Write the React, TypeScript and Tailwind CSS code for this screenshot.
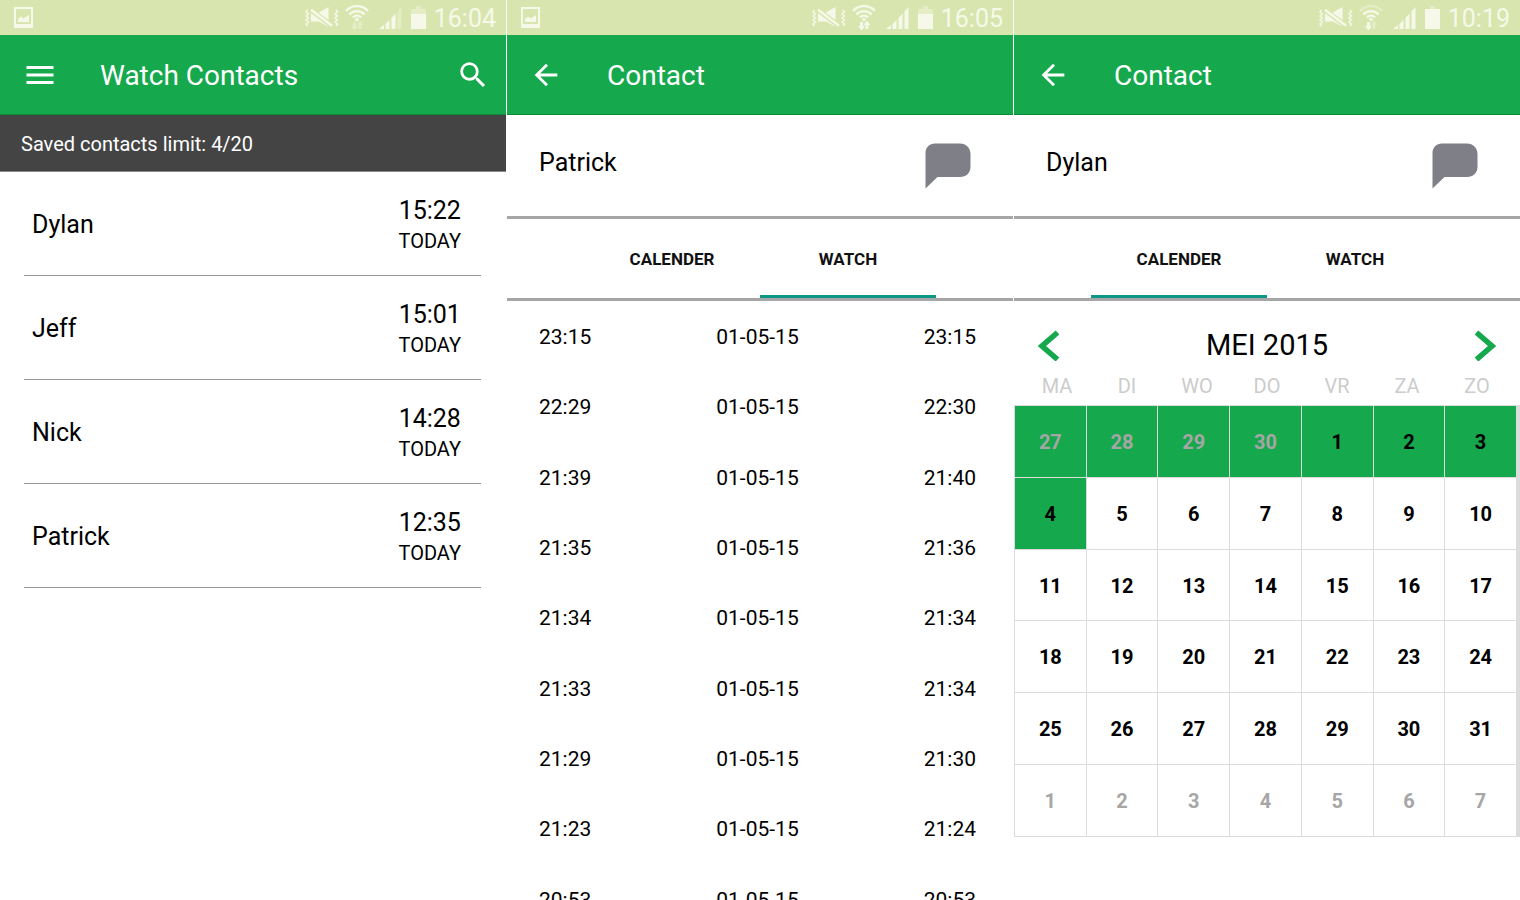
import type { ReactNode } from "react";
import clsx from "clsx";
import { MdArrowBack, MdMenu, MdSearch } from "react-icons/md";

type Contact = { name: string; time: string; day: string };
type LogEntry = { start: string; date: string; end: string };
type CalendarDay = { day: number; outside?: boolean; marked?: boolean };

const contacts: Contact[] = [
  { name: "Dylan", time: "15:22", day: "TODAY" },
  { name: "Jeff", time: "15:01", day: "TODAY" },
  { name: "Nick", time: "14:28", day: "TODAY" },
  { name: "Patrick", time: "12:35", day: "TODAY" },
];

const log: LogEntry[] = [
  { start: "23:15", date: "01-05-15", end: "23:15" },
  { start: "22:29", date: "01-05-15", end: "22:30" },
  { start: "21:39", date: "01-05-15", end: "21:40" },
  { start: "21:35", date: "01-05-15", end: "21:36" },
  { start: "21:34", date: "01-05-15", end: "21:34" },
  { start: "21:33", date: "01-05-15", end: "21:34" },
  { start: "21:29", date: "01-05-15", end: "21:30" },
  { start: "21:23", date: "01-05-15", end: "21:24" },
  { start: "20:53", date: "01-05-15", end: "20:53" },
];

const weekdays = ["MA", "DI", "WO", "DO", "VR", "ZA", "ZO"];

const days: CalendarDay[] = [
  ...[27, 28, 29, 30].map((day) => ({ day, outside: true, marked: true })),
  ...Array.from({ length: 31 }, (_, i) => ({ day: i + 1, marked: i < 4 })),
  ...[1, 2, 3, 4, 5, 6, 7].map((day) => ({ day, outside: true })),
];

const weeks = Array.from({ length: 6 }, (_, i) => days.slice(i * 7, i * 7 + 7));

function ScreenshotIcon() {
  return (
    <svg width="20" height="22" viewBox="0 0 20 22" fill="currentColor" aria-hidden="true">
      <path fillRule="evenodd" d="M0 0H19V21H0ZM2 2V17H17V2Z" />
      <path d="M4 15V12L7 9.500L9.500 11.500L15 8V15Z" />
    </svg>
  );
}

function MuteIcon() {
  return (
    <svg width="34" height="22" viewBox="0 0 34 22" fill="none" stroke="currentColor" aria-hidden="true">
      <path d="M13 6L23.500 0V13Z" fill="currentColor" stroke="none" />
      <path d="M6 6H10L23 15V19.500L14 14.500H6Z" fill="currentColor" stroke="none" />
      <path d="M4 1.500L27 19" stroke="#d9e5ae" strokeWidth="4.800" />
      <path d="M6 2.800L27 18.800" strokeWidth="2.400" />
      <path
        d="M2.500 3L1 5L3.500 7L1 9L3.500 11L1 13L3.500 15L1 17L2.500 19M31 3L32.500 5L30 7L32.500 9L30 11L32.500 13L30 15L32.500 17L31 19"
        strokeWidth="1.400"
      />
    </svg>
  );
}

function WifiIcon({ down, up, outer }: { down: boolean; up: boolean; outer: boolean }) {
  return (
    <svg width="24" height="26" viewBox="0 0 24 26" fill="none" stroke="currentColor" strokeWidth="2.400" aria-hidden="true">
      <path d="M1 6C7 -0.500 17 -0.500 23 6" opacity={outer ? 1 : 0.4} />
      <path d="M4.500 9.500C8.500 5 15.500 5 19.500 9.500" />
      <path d="M8 12.500C10 10 14 10 16 12.500" />
      <circle cx="12" cy="14.500" r="1.800" fill="currentColor" stroke="none" />
      <path
        d="M8 17H11V21H13L9.500 25.500L6 21H8Z"
        fill="currentColor"
        stroke="none"
        opacity={down ? 1 : 0.4}
      />
      <path
        d="M13.500 24V20H11.500L15 15.500L18.500 20H16.500V24Z"
        fill="currentColor"
        stroke="none"
        opacity={up ? 1 : 0.4}
      />
    </svg>
  );
}

function SignalIcon({ full }: { full: boolean }) {
  return (
    <svg width="24" height="22" viewBox="0 0 24 22" fill="currentColor" aria-hidden="true">
      <path d="M0 22L5 18V22ZM6.500 17L10.500 13V22H6.500ZM12.500 11L16.500 6.500V22H12.500Z" />
      <path d="M18.500 4.500L22.500 0V22H18.500Z" opacity={full ? 1 : 0.35} />
    </svg>
  );
}

function BatteryIcon({ full }: { full: boolean }) {
  return (
    <svg width="15" height="23" viewBox="0 0 15 23" fill="currentColor" aria-hidden="true">
      <path d="M5 0H10V3H15V8H0V3H5Z" opacity={0.4} />
      <path d={full ? "M0 3H15V23H0Z" : "M0 8H15V23H0Z"} />
    </svg>
  );
}

function ChatIcon() {
  return (
    <svg width="46" height="46" viewBox="0 0 46 46" aria-hidden="true">
      <path
        d="M10 0.500H35C41 0.500 45.500 5 45.500 11V24C45.500 30 41 34 35 34H12.500L0.500 45.500V10C0.500 4.500 4.500 0.500 10 0.500Z"
        fill="#7f7f88"
      />
    </svg>
  );
}

function Chevron({ direction }: { direction: "left" | "right" }) {
  return (
    <svg width="22" height="31" viewBox="0 0 22 31" fill="none" stroke="#15a84c" strokeWidth="5.500" aria-hidden="true">
      <path d={direction === "left" ? "M19.500 2.500L4 16L19.500 29.500" : "M2.500 2.500L18 16L2.500 29.500"} />
    </svg>
  );
}

function StatusBar({
  time,
  screenshot = false,
  data = "none",
  battery = "partial",
}: {
  time: string;
  screenshot?: boolean;
  data?: "none" | "both" | "down";
  battery?: "partial" | "full";
}) {
  return (
    <div className="flex h-[35px] items-center justify-between bg-[#d9e5ae] pr-2.5 pl-3.5 text-[#f6f9e9]">
      <div>{screenshot && <ScreenshotIcon />}</div>
      <div className="flex items-center">
        <MuteIcon />
        <span className="ml-1.5">
          <WifiIcon down={data !== "none"} up={data === "both"} outer={data !== "down"} />
        </span>
        <span className="ml-2.5">
          <SignalIcon full={data !== "none"} />
        </span>
        <span className="ml-2">
          <BatteryIcon full={battery === "full"} />
        </span>
        <span className="ml-2 pt-0.5 text-[25px] leading-8">{time}</span>
      </div>
    </div>
  );
}

function AppBar({ title, icon, action }: { title: string; icon: ReactNode; action?: ReactNode }) {
  return (
    <header className="flex h-20 items-center border-b border-[#0c8a35] bg-[#15a84c] pr-4 pl-[22px] text-white">
      {icon}
      <h1 className="ml-[42px] flex-1 pt-0.5 text-[28px] leading-9">{title}</h1>
      {action}
    </header>
  );
}

function Screen({ children }: { children: ReactNode }) {
  return <section className="min-w-0 flex-1 overflow-hidden bg-white">{children}</section>;
}

function BackButton() {
  return (
    <button type="button" aria-label="Back" className="w-9">
      <MdArrowBack size={34} />
    </button>
  );
}

function ContactHeader({ name, active }: { name: string; active: "CALENDER" | "WATCH" }) {
  return (
    <>
      <div className="flex h-[104px] items-center justify-between border-b-[3px] border-[#a6a6a6] pr-[42px] pl-8">
        <h2 className="pb-1.5 text-[25px] leading-8">{name}</h2>
        <button type="button" aria-label="Send message">
          <ChatIcon />
        </button>
      </div>
      <nav className="flex h-[82px] justify-center border-b-[3px] border-[#a6a6a6]">
        {["CALENDER", "WATCH"].map((tab) => (
          <button
            key={tab}
            type="button"
            className={clsx(
              "w-44 border-b-[3px] pt-1 text-[17px] leading-6 font-bold text-[#111]",
              tab === active ? "border-[#0b9688]" : "border-transparent",
            )}
          >
            {tab}
          </button>
        ))}
      </nav>
    </>
  );
}

function ContactsScreen() {
  return (
    <Screen>
      <StatusBar time="16:04" screenshot />
      <AppBar
        title="Watch Contacts"
        icon={
          <button type="button" aria-label="Menu" className="w-9">
            <MdMenu size={36} />
          </button>
        }
        action={
          <button type="button" aria-label="Search">
            <MdSearch size={34} />
          </button>
        }
      />
      <p className="flex h-[57px] items-center border-b border-[#888] bg-[#444] pt-0.5 pl-[21px] text-[20px] leading-6 text-white">
        Saved contacts limit: 4/20
      </p>
      <ul className="pr-[25px] pl-6">
        {contacts.map((contact) => (
          <li
            key={contact.name}
            className="flex h-[104px] items-center justify-between border-b border-[#999] pt-0.5 pr-5 pl-2"
          >
            <span className="text-[25px] leading-8">{contact.name}</span>
            <span className="flex flex-col items-center">
              <span className="text-[25px] leading-8">{contact.time}</span>
              <span className="text-[20px] leading-7">{contact.day}</span>
            </span>
          </li>
        ))}
      </ul>
    </Screen>
  );
}

function WatchScreen() {
  return (
    <Screen>
      <StatusBar time="16:05" screenshot data="both" />
      <AppBar title="Contact" icon={<BackButton />} />
      <ContactHeader name="Patrick" active="WATCH" />
      <div className="pt-px pr-[37px] pl-8">
        <table className="h-[633px] w-full table-fixed text-[21px] leading-6">
          <tbody>
            {log.map((entry) => (
              <tr key={entry.start}>
                <td className="p-0 text-left">{entry.start}</td>
                <td className="p-0 text-center">{entry.date}</td>
                <td className="p-0 text-right">{entry.end}</td>
              </tr>
            ))}
          </tbody>
        </table>
      </div>
    </Screen>
  );
}

function CalendarScreen() {
  return (
    <Screen>
      <StatusBar time="10:19" data="down" battery="full" />
      <AppBar title="Contact" icon={<BackButton />} />
      <ContactHeader name="Dylan" active="CALENDER" />
      <div className="flex items-center justify-between px-6 pt-[26px]">
        <button type="button" aria-label="Previous month">
          <Chevron direction="left" />
        </button>
        <h3 className="text-[29px] leading-9">MEI 2015</h3>
        <button type="button" aria-label="Next month">
          <Chevron direction="right" />
        </button>
      </div>
      <div className="grid grid-cols-7 px-2 pt-[11px] pb-[7px] text-center text-[20px] leading-6 text-[#ccc]">
        {weekdays.map((weekday) => (
          <span key={weekday}>{weekday}</span>
        ))}
      </div>
      <div className="bg-[#dcdcdc] pr-[3px]">
        <table className="h-[432px] w-full table-fixed border-separate border-spacing-px text-[20px] leading-6 font-bold">
          <tbody>
            {weeks.map((week, i) => (
              <tr key={i}>
                {week.map((cell) => (
                  <td
                    key={cell.day}
                    className={clsx(
                      "p-0 text-center",
                      cell.marked ? "bg-[#15a84c]" : "bg-white",
                      cell.outside ? "text-[#a6a6a6]" : "text-black",
                    )}
                  >
                    <button type="button" className="w-full pt-px">
                      {cell.day}
                    </button>
                  </td>
                ))}
              </tr>
            ))}
          </tbody>
        </table>
      </div>
    </Screen>
  );
}

export default function App() {
  return (
    <main className="flex h-screen gap-px overflow-hidden bg-white font-[Roboto,sans-serif] text-black">
      <ContactsScreen />
      <WatchScreen />
      <CalendarScreen />
    </main>
  );
}
